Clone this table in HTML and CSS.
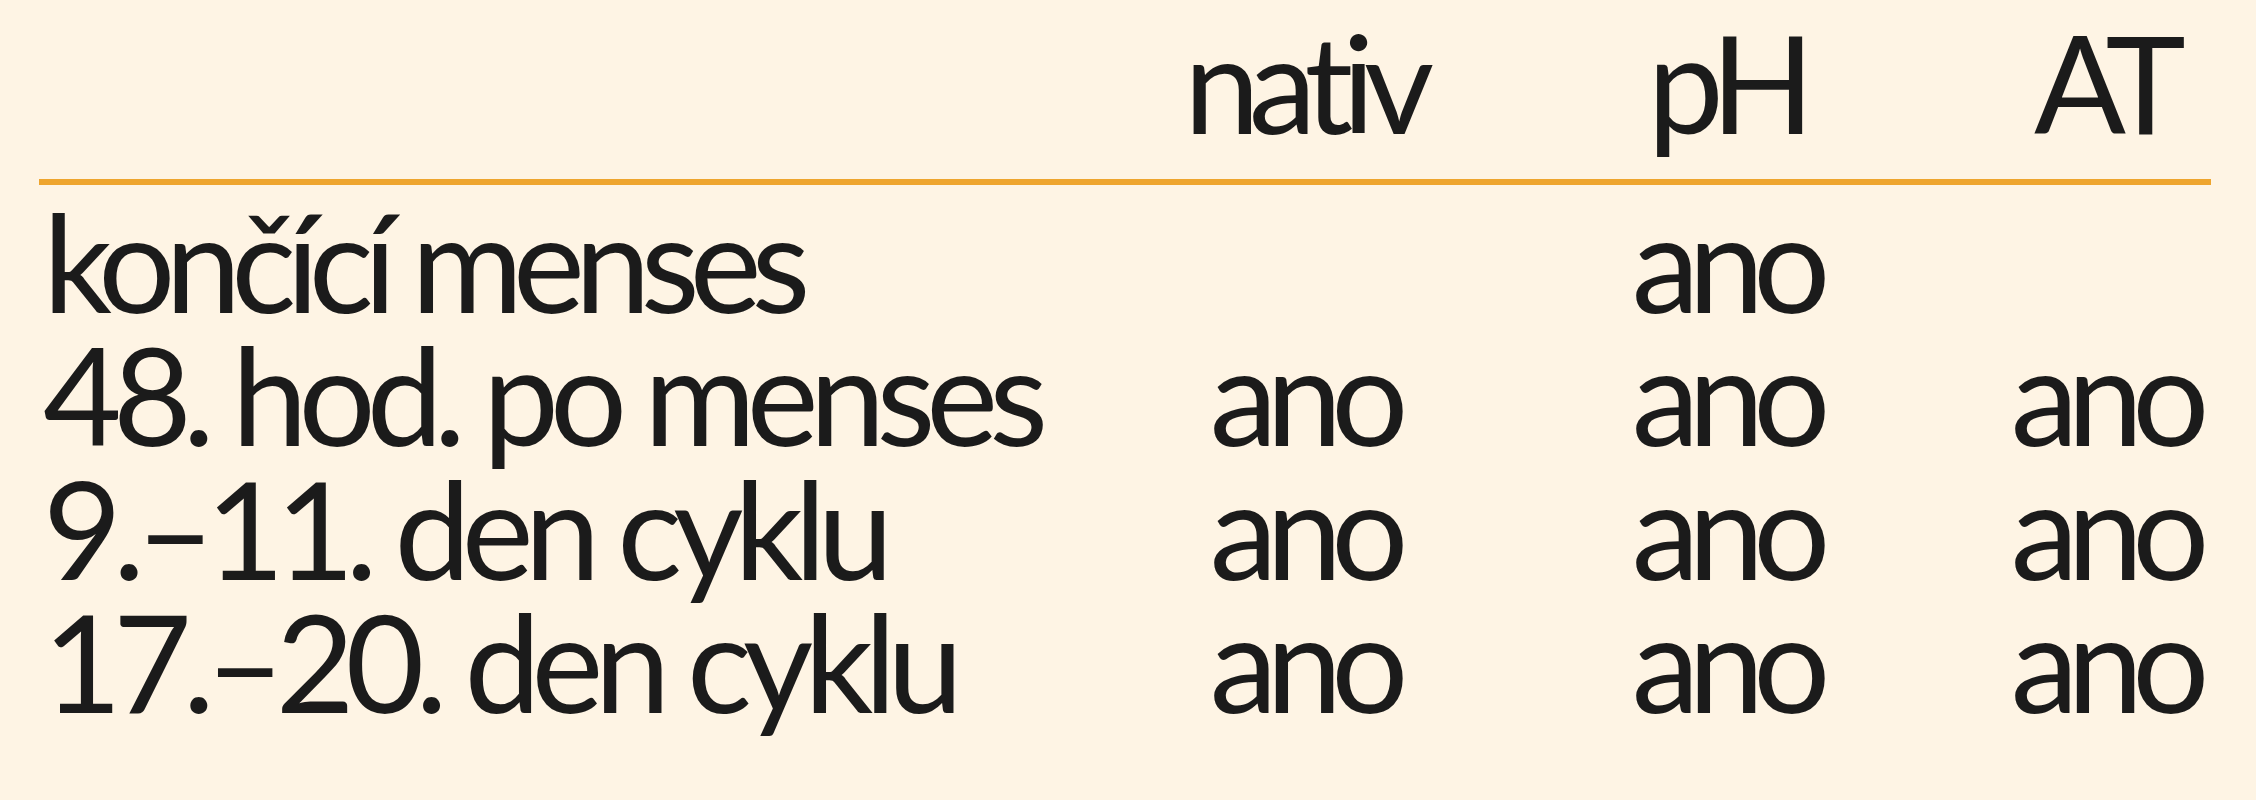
FILE: index.html
```html
<!DOCTYPE html>
<html lang="cs">
<head>
<meta charset="utf-8">
<title>Tabulka</title>
<link rel="stylesheet" href="styles.css">
</head>
<body>
<div class="table">
  <div class="row head">
    <div class="cell label"></div>
    <div class="cell c1">nativ</div>
    <div class="cell c2">pH</div>
    <div class="cell c3">AT</div>
  </div>
  <div class="body">
    <div class="row">
      <div class="cell label tight">končící menses</div>
      <div class="cell c1"></div>
      <div class="cell c2">ano</div>
      <div class="cell c3"></div>
    </div>
    <div class="row">
      <div class="cell label">48. hod. po menses</div>
      <div class="cell c1">ano</div>
      <div class="cell c2">ano</div>
      <div class="cell c3">ano</div>
    </div>
    <div class="row">
      <div class="cell label">9.–11. den cyklu</div>
      <div class="cell c1">ano</div>
      <div class="cell c2">ano</div>
      <div class="cell c3">ano</div>
    </div>
    <div class="row">
      <div class="cell label">17.–20. den cyklu</div>
      <div class="cell c1">ano</div>
      <div class="cell c2">ano</div>
      <div class="cell c3">ano</div>
    </div>
  </div>
</div>
</body>
</html>
```
FILE: styles.css
```css
html, body {
  margin: 0;
  padding: 0;
  background: #fef4e4;
}
body {
  width: 2256px;
  height: 800px;
  overflow: hidden;
  font-family: Lato, "Liberation Sans", sans-serif;
  font-size: 136px;
  letter-spacing: -9px;
  font-variant-ligatures: none;
  font-feature-settings: "liga" 0, "clig" 0;
  color: #1b1b1b;
}
.table {
  padding: 15px 45px 0 39px;
}
.row {
  display: grid;
  grid-template-columns: 1059px 420px 424px 269px;
  line-height: 133.5px;
  white-space: nowrap;
}
.head {
  padding-bottom: 30px;
  border-bottom: 6px solid #eea52e;
}
.body {
  padding-top: 9px;
}
.cell.label {
  padding-left: 4px;
}
.cell.tight {
  letter-spacing: -10px;
}
.c1, .c2, .c3 {
  text-align: center;
  letter-spacing: -11px;
}
.c1, .c2 {
  padding-right: 9px;
}
.c3 {
  padding-left: 56px;
}
```
